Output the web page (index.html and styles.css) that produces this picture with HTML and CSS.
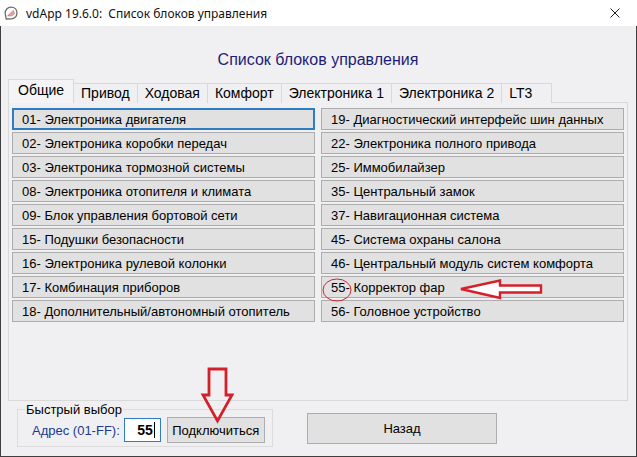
FILE: index.html
```html
<!DOCTYPE html>
<html lang="ru">
<head>
<meta charset="utf-8">
<title>vdApp</title>
<link rel="stylesheet" href="styles.css">
</head>
<body>
<div class="window">
  <div class="titlebar">
    <svg class="app-icon" viewBox="0 0 16 16">
      <path d="M8 2.2 C11.6 2.2 14 4.6 14 8 C14 11.3 11.5 13.8 8.2 13.8 L3.2 14 L2.2 8.4 C2 4.8 4.6 2.2 8 2.2 Z" fill="#fff" stroke="#6b6b6b" stroke-width="1.3"/>
      <path d="M4.6 10.8 L10.4 5.4 L11.4 8.6 C10.4 10.6 8 11.4 4.6 10.8 Z" fill="#e8a3a0" stroke="#b86a62" stroke-width="0.6"/>
    </svg>
    <span class="title">vdApp 19.6.0:&nbsp; Список блоков управления</span>
    <svg class="close" viewBox="0 0 10 10"><path d="M0.5 0.5 L9.5 9.5 M9.5 0.5 L0.5 9.5" stroke="#222" stroke-width="1"/></svg>
  </div>
  <div class="client">
    <h1 class="heading">Список блоков управления</h1>
    <div class="tabs">
      <div class="tab tab-active">Общие</div>
      <div class="tab">Привод</div>
      <div class="tab">Ходовая</div>
      <div class="tab">Комфорт</div>
      <div class="tab">Электроника 1</div>
      <div class="tab">Электроника 2</div>
      <div class="tab tab-last">LT3</div>
    </div>
    <div class="panel">
      <div class="grid">
        <button class="unit unit-focus">01- Электроника двигателя</button>
        <button class="unit">02- Электроника коробки передач</button>
        <button class="unit">03- Электроника тормозной системы</button>
        <button class="unit">08- Электроника отопителя и климата</button>
        <button class="unit">09- Блок управления бортовой сети</button>
        <button class="unit">15- Подушки безопасности</button>
        <button class="unit">16- Электроника рулевой колонки</button>
        <button class="unit">17- Комбинация приборов</button>
        <button class="unit">18- Дополнительный/автономный отопитель</button>
        <button class="unit">19- Диагностический интерфейс шин данных</button>
        <button class="unit">22- Электроника полного привода</button>
        <button class="unit">25- Иммобилайзер</button>
        <button class="unit">35- Центральный замок</button>
        <button class="unit">37- Навигационная система</button>
        <button class="unit">45- Система охраны салона</button>
        <button class="unit">46- Центральный модуль систем комфорта</button>
        <button class="unit">55- Корректор фар</button>
        <button class="unit">56- Головное устройство</button>
      </div>
    </div>
    <div class="bottom">
      <fieldset class="quick">
        <legend class="quick-legend">Быстрый выбор</legend>
        <div class="quick-row">
          <span class="addr-label">Адрес (01-FF):</span>
          <div class="addr-input"><span class="addr-value">55</span><span class="caret"></span></div>
          <button class="connect">Подключиться</button>
        </div>
      </fieldset>
      <button class="back">Назад</button>
    </div>
  </div>
  <svg class="annot" viewBox="0 0 637 457" width="637" height="457">
    <ellipse cx="337" cy="290" rx="14" ry="11" fill="none" stroke="#c8282e" stroke-width="1"/>
    <polygon points="461,289 500,280.5 500,285.5 541,285.5 541,292.5 500,292.5 500,298" fill="#ffffff" stroke="#d3202a" stroke-width="2.4" stroke-linejoin="miter"/>
    <polygon points="209,369 226,369 226,395 232,395 217.5,421 203,395 209,395" fill="none" stroke="#d3202a" stroke-width="2.8" stroke-linejoin="miter"/>
  </svg>
</div>
</body>
</html>
```
FILE: styles.css
```css
body {
  margin: 0;
  background: #ffffff;
  font-family: "Liberation Sans", Arial, sans-serif;
}

.window {
  position: relative;
  width: 637px;
  height: 457px;
  display: flex;
  flex-direction: column;
  box-sizing: border-box;
}

.titlebar {
  height: 26px;
  flex: none;
  display: flex;
  align-items: center;
  background: #ffffff;
  padding-left: 3px;
}

.app-icon {
  width: 16px;
  height: 16px;
  margin-right: 7px;
}

.title {
  flex: 1;
  font-family: "Noto Sans", "Open Sans", sans-serif;
  font-size: 12px;
  color: #111;
  white-space: nowrap;
}

.close {
  width: 10px;
  height: 10px;
  margin-right: 17px;
}

.client {
  flex: 1;
  background: #f0f0f2;
  border: 1px solid #3f3f3f;
  border-top: none;
  padding: 0 8px 0 7px;
  display: flex;
  flex-direction: column;
}

.heading {
  margin: 0;
  padding-top: 24px;
  font-size: 16px;
  line-height: 20px;
  font-weight: normal;
  text-align: center;
  color: #1c1c78;
}

.tabs {
  margin-top: 10px;
  height: 23px;
  display: flex;
  align-items: flex-end;
  position: relative;
  z-index: 1;
  margin-bottom: -1px;
}

.tab {
  height: 20px;
  box-sizing: border-box;
  padding: 0 7px;
  min-width: 51px;
  border: 1px solid #d9d9d9;
  border-right: none;
  border-bottom: none;
  font-size: 14px;
  line-height: 19px;
  text-align: left;
  color: #000;
  background: #f0f0f2;
}

.tab-last {
  border-right: 1px solid #d9d9d9;
}

.tab-active {
  height: 24px;
  padding: 0 9px;
  line-height: 20px;
  border-right: 1px solid #d9d9d9;
  background: #f4f4f6;
}

.tab-active + .tab {
  border-left: none;
}

.panel {
  height: 299px;
  box-sizing: border-box;
  border: 1px solid #d9d9d9;
  background: #f0f0f2;
}

.grid {
  display: grid;
  grid-template-columns: 303px 303px;
  grid-template-rows: repeat(9, 22px);
  grid-auto-flow: column;
  column-gap: 6px;
  row-gap: 2px;
  padding: 5px 3px;
}

.unit {
  margin: 0;
  height: 22px;
  box-sizing: border-box;
  border: 1px solid #adadad;
  background: #e1e1e1;
  font-family: "Liberation Sans", Arial, sans-serif;
  font-size: 13px;
  color: #000;
  text-align: left;
  padding: 0 0 0 9px;
  white-space: nowrap;
}

.unit-focus {
  border: 2px solid #2f7cc0;
  padding-left: 8px;
}

.bottom {
  display: flex;
  align-items: flex-start;
  margin-top: 1px;
}

.quick {
  margin: 0 0 0 9px;
  width: 256px;
  min-width: 0;
  box-sizing: border-box;
  border: 1px solid #dcdcdc;
  padding: 0 6px 3px 14px;
}

.quick-legend {
  font-size: 13px;
  line-height: 15px;
  padding: 0 1px;
  margin-left: -7px;
  color: #000;
}

.quick-row {
  display: flex;
  align-items: center;
  height: 26px;
}

.addr-label {
  flex: none;
  font-size: 13px;
  color: #203a8e;
  margin-right: 4px;
  white-space: nowrap;
}

.addr-input {
  flex: none;
  width: 37px;
  height: 24px;
  box-sizing: border-box;
  border: 1px solid #2f7cc0;
  background: #ffffff;
  display: flex;
  align-items: center;
  justify-content: flex-end;
  padding-right: 5px;
  margin-right: 6px;
}

.addr-value {
  font-size: 14px;
  font-weight: bold;
  color: #000;
}

.caret {
  width: 1px;
  height: 16px;
  background: #000;
  margin-left: 1px;
}

.connect {
  flex: none;
  margin: 0;
  width: 98px;
  height: 26px;
  box-sizing: border-box;
  border: 1px solid #adadad;
  background: #e1e1e1;
  font-family: "Liberation Sans", Arial, sans-serif;
  font-size: 13px;
  color: #000;
  padding: 0;
}

.back {
  margin: 11px 0 0 34px;
  width: 190px;
  height: 31px;
  box-sizing: border-box;
  border: 1px solid #adadad;
  background: #e1e1e1;
  font-family: "Liberation Sans", Arial, sans-serif;
  font-size: 13px;
  color: #000;
  padding: 0;
}

.annot {
  position: absolute;
  left: 0;
  top: 0;
  pointer-events: none;
}
```
